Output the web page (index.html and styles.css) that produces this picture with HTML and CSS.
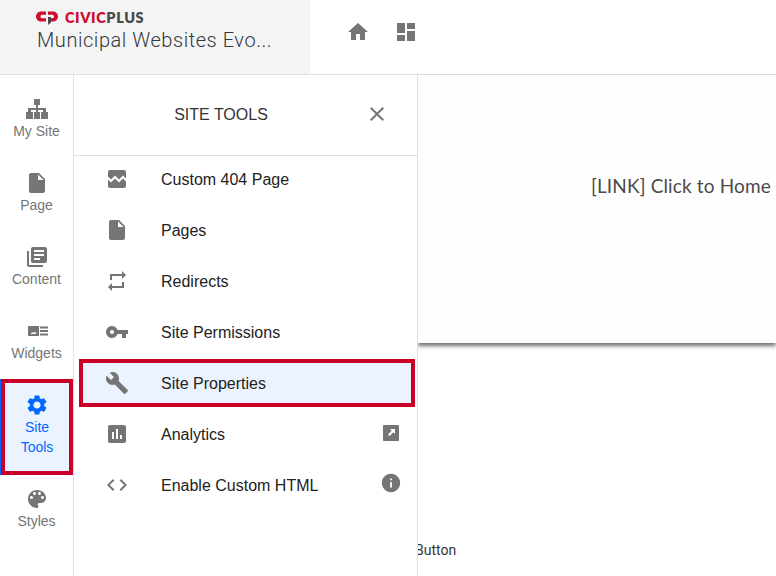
FILE: index.html
```html
<!DOCTYPE html>
<html lang="en">
<head>
<meta charset="utf-8">
<title>Site Tools</title>
<link rel="stylesheet" href="styles.css">
</head>
<body>
<header class="topbar">
  <div class="brand">
    <div class="logo">
      <svg class="logo-mark" viewBox="0 0 22 14" width="22" height="14"><path fill="#ce0e2d" d="M10 .5H5C2.200 .5 0 2.700 0 5.500S2.200 10.500 5 10.500H10V7.200H6C5.200 7.200 4.500 6.500 4.500 5.500S5.200 3.800 6 3.800H10z"/><path fill="#ce0e2d" d="M12 .5h5c2.800 0 5 2.200 5 5s-2.200 5-5 5h-2V7.200h1.500c.8 0 1.500-.7 1.500-1.700s-.7-1.700-1.500-1.700H12z"/><path fill="#4a4a4a" d="M12 6h3v5.500L12 14z"/></svg>
      <span class="logo-text"><span class="logo-civic">CIVIC</span><span class="logo-plus">PLUS</span></span>
    </div>
    <div class="site-name">Municipal Websites Evo...</div>
  </div>
  <div class="top-actions">
    <svg class="icon" viewBox="0 0 24 24"><path d="M10 20v-6h4v6h5v-8h3L12 3 2 12h3v8z"/></svg>
    <svg class="icon" viewBox="0 0 24 24"><path d="M3 13h8V3H3v10zm0 8h8v-6H3v6zm10 0h8V11h-8v10zm0-18v6h8V3h-8z"/></svg>
  </div>
</header>
<div class="workspace">
  <nav class="rail">
    <a class="rail-item">
      <svg class="icon" viewBox="0 0 24 24"><path d="M9 2h6v6h-2v3h8v4h2v7h-7v-7h2v-2h-5v2h2v7H9v-7h2v-2H6v2h2v7H1v-7h2v-4h8V8H9z"/></svg>
      <span class="rail-label">My Site</span>
    </a>
    <a class="rail-item">
      <svg class="icon" viewBox="0 0 24 24"><path d="M6 2c-1.100 0-2 .9-2 2v16c0 1.100.9 2 2 2h12c1.100 0 2-.9 2-2V8l-6-6H6zm7 7V3.500L18.500 9H13z"/></svg>
      <span class="rail-label">Page</span>
    </a>
    <a class="rail-item">
      <svg class="icon" viewBox="0 0 24 24"><path d="M4 6H2v14c0 1.100.9 2 2 2h14v-2H4V6zm16-4H8c-1.100 0-2 .9-2 2v12c0 1.100.9 2 2 2h12c1.100 0 2-.9 2-2V4c0-1.100-.9-2-2-2zm-1 9H9V9h10v2zm-4 4H9v-2h6v2zm4-8H9V5h10v2z"/></svg>
      <span class="rail-label">Content</span>
    </a>
    <a class="rail-item">
      <svg class="icon" viewBox="0 0 24 24"><path fill-rule="evenodd" d="M4 7h9c.6 0 1 .4 1 1v8c0 .6-.4 1-1 1H4c-.6 0-1-.4-1-1V8c0-.6.4-1 1-1zm1.500 8h6l-1.500-2.500-1.500 1.500-1-1z"/><path d="M15 7.500h8v2h-8zM15 11h8v2h-8zM15 14.500h8v2h-8z"/></svg>
      <span class="rail-label">Widgets</span>
    </a>
    <a class="rail-item rail-item-active">
      <svg class="icon" viewBox="0 0 24 24"><path d="M19.140 12.940c.04-.3.06-.61.06-.94 0-.32-.02-.64-.07-.94l2.030-1.580c.18-.14.23-.41.12-.61l-1.920-3.320c-.12-.22-.37-.29-.59-.22l-2.390.96c-.5-.38-1.030-.7-1.620-.94l-.36-2.540c-.04-.24-.24-.41-.48-.41h-3.840c-.24 0-.43.17-.47.41l-.36 2.540c-.59.24-1.130.57-1.620.94l-2.390-.96c-.22-.08-.47 0-.59.22L2.740 8.870c-.12.21-.08.47.12.61l2.030 1.580c-.05.3-.09.63-.09.94s.02.64.07.94l-2.030 1.580c-.18.14-.23.41-.12.61l1.920 3.320c.12.22.37.29.59.22l2.390-.96c.5.38 1.030.7 1.620.94l.36 2.540c.05.24.24.41.48.41h3.840c.24 0 .44-.17.47-.41l.36-2.540c.59-.24 1.130-.56 1.620-.94l2.390.96c.22.08.47 0 .59-.22l1.920-3.320c.12-.22.07-.47-.12-.61l-2.010-1.580zM12 15.600c-1.980 0-3.600-1.620-3.600-3.600s1.620-3.600 3.600-3.600 3.600 1.620 3.600 3.600-1.620 3.600-3.600 3.600z"/></svg>
      <span class="rail-label">Site<br>Tools</span>
    </a>
    <a class="rail-item">
      <svg class="icon" viewBox="0 0 24 24"><path d="M12 3c-4.970 0-9 4.030-9 9s4.030 9 9 9c.83 0 1.500-.67 1.500-1.500 0-.39-.15-.74-.39-1.010-.23-.26-.38-.61-.38-.99 0-.83.67-1.500 1.500-1.500H16c2.760 0 5-2.240 5-5 0-4.420-4.030-8-9-8zm-5.500 9c-.83 0-1.500-.67-1.500-1.500S5.670 9 6.500 9 8 9.670 8 10.500 7.330 12 6.500 12zm3-4C8.670 8 8 7.330 8 6.500S8.670 5 9.500 5s1.500.67 1.500 1.500S10.330 8 9.500 8zm5 0c-.83 0-1.500-.67-1.500-1.500S13.670 5 14.500 5s1.500.67 1.500 1.500S15.330 8 14.500 8zm3 4c-.83 0-1.500-.67-1.500-1.500S16.670 9 17.500 9s1.500.67 1.500 1.500-.67 1.500-1.500 1.500z"/></svg>
      <span class="rail-label">Styles</span>
    </a>
  </nav>
  <aside class="panel">
    <div class="panel-head">
      <h2 class="panel-title">SITE TOOLS</h2>
      <svg class="icon panel-close" viewBox="0 0 24 24"><path d="M19 6.410L17.590 5 12 10.590 6.410 5 5 6.410 10.590 12 5 17.590 6.410 19 12 13.410 17.590 19 19 17.590 13.410 12z"/></svg>
    </div>
    <ul class="tool-list">
      <li class="tool">
        <svg class="icon tool-icon" viewBox="0 0 24 24"><path d="M21 5v6.590l-3-3.010-4 4.010-4-4-4 4-3-3.010V5c0-1.100.9-2 2-2h14c1.100 0 2 .9 2 2zm-3 6.420l3 3.010V19c0 1.100-.9 2-2 2H5c-1.100 0-2-.9-2-2v-6.580l3 2.990 4-4 4 4 4-3.990z"/></svg>
        <span class="tool-name">Custom 404 Page</span>
      </li>
      <li class="tool">
        <svg class="icon tool-icon" viewBox="0 0 24 24"><path d="M6 2c-1.100 0-2 .9-2 2v16c0 1.100.9 2 2 2h12c1.100 0 2-.9 2-2V8l-6-6H6zm7 7V3.500L18.500 9H13z"/></svg>
        <span class="tool-name">Pages</span>
      </li>
      <li class="tool">
        <svg class="icon tool-icon" viewBox="0 0 24 24"><path d="M7 7h10v3l4-4-4-4v3H5v6h2V7zm10 10H7v-3l-4 4 4 4v-3h12v-6h-2v4z"/></svg>
        <span class="tool-name">Redirects</span>
      </li>
      <li class="tool">
        <svg class="icon tool-icon" viewBox="0 0 24 24"><path d="M12.650 10C11.830 7.670 9.610 6 7 6c-3.310 0-6 2.690-6 6s2.690 6 6 6c2.610 0 4.830-1.670 5.650-4H17v4h4v-4h2v-4H12.650zM7 14c-1.100 0-2-.9-2-2s.9-2 2-2 2 .9 2 2-.9 2-2 2z"/></svg>
        <span class="tool-name">Site Permissions</span>
      </li>
      <li class="tool tool-active">
        <svg class="icon tool-icon" viewBox="0 0 24 24"><path d="M22.700 19l-9.100-9.100c.9-2.300.4-5-1.500-6.900-2-2-5-2.400-7.400-1.300L9 6 6 9 1.600 4.700C.4 7.100.9 10.100 2.900 12.100c1.900 1.900 4.600 2.400 6.900 1.500l9.100 9.100c.4.4 1 .4 1.400 0l2.300-2.300c.5-.4.5-1.100.1-1.400z"/></svg>
        <span class="tool-name">Site Properties</span>
      </li>
      <li class="tool">
        <svg class="icon tool-icon" viewBox="0 0 24 24"><path d="M19 3H5c-1.100 0-2 .9-2 2v14c0 1.100.9 2 2 2h14c1.100 0 2-.9 2-2V5c0-1.100-.9-2-2-2zM9 17H7v-7h2v7zm4 0h-2V7h2v10zm4 0h-2v-4h2v4z"/></svg>
        <span class="tool-name">Analytics</span>
        <svg class="icon tool-extra" viewBox="0 0 20 20"><path fill-rule="evenodd" d="M3 2h14c.6 0 1 .4 1 1v14c0 .6-.4 1-1 1H3c-.6 0-1-.4-1-1V3c0-.6.4-1 1-1zm6 4l1.700 1.700L7 11.400 8.600 13l3.700-3.700L14 11V6z"/></svg>
      </li>
      <li class="tool">
        <svg class="icon tool-icon" viewBox="0 0 24 24"><path d="M9.400 16.600L4.800 12l4.600-4.600L8 6l-6 6 6 6 1.400-1.400zm5.200 0l4.600-4.600-4.600-4.600L16 6l6 6-6 6-1.400-1.400z"/></svg>
        <span class="tool-name">Enable Custom HTML</span>
        <svg class="icon tool-extra tool-info" viewBox="0 0 24 24"><path d="M12 2C6.480 2 2 6.480 2 12s4.480 10 10 10 10-4.480 10-10S17.520 2 12 2zm1 15h-2v-6h2v6zm0-8h-2V7h2v2z"/></svg>
      </li>
    </ul>
  </aside>
  <main class="canvas">
    <section class="preview">
      <p class="preview-link">[LINK] Click to Home</p>
    </section>
    <p class="canvas-button">Button</p>
  </main>
</div>
</body>
</html>
```
FILE: styles.css
```css
* { box-sizing: border-box; }
html, body { margin: 0; height: 100%; overflow: hidden; }
body { background: #fff; font-family: "Liberation Sans", Arial, sans-serif; color: #222; }

.icon { width: 24px; height: 24px; fill: #757575; flex: none; display: block; }

.topbar { display: flex; height: 75px; border-bottom: 1px solid #e0e0e0; }
.brand { width: 310px; background: #f4f4f4; padding: 11px 0 0 36px; }
.logo { display: flex; align-items: center; gap: 7px; height: 14px; }
.logo-mark { display: block; flex: none; }
.logo-text { font: 800 14.500px/14px Lato, sans-serif; letter-spacing: .6px; }
.logo-civic { color: #ce0e2d; }
.logo-plus { color: #4a4a4a; }
.site-name { font: 300 20px/24px Roboto, sans-serif; letter-spacing: .55px; color: #33383f; margin: 3px 0 0 1px; white-space: nowrap; }
.top-actions { display: flex; gap: 24px; padding: 20px 0 0 36px; }

.workspace { display: flex; height: 501px; }

.rail { width: 74px; flex: none; border-right: 1px solid #e0e0e0; padding-top: 22px; background: #fff; display: flex; flex-direction: column; }
.rail-item { display: flex; flex-direction: column; align-items: center; margin-bottom: 30px; }
.rail-label { font-size: 14px; line-height: 20px; color: #757575; text-align: center; }
.rail-item-active { margin: -14px 0 12px 1px; padding: 10px 0 14px; border: 4px solid #cb0028; background: #ebf4fe; box-shadow: -1px 0 0 #0068ff; }
.rail-item-active .icon { fill: #0068ff; }
.rail-item-active .rail-label { color: #0068ff; }

.panel { width: 344px; flex: none; border-right: 1px solid #e0e0e0; background: #fff; position: relative; z-index: 1; }
.panel-head { display: flex; align-items: center; justify-content: center; height: 80px; padding: 0 49px 1px 0; box-shadow: 0 1px 0 #e0e0e0; position: relative; }
.panel-title { margin: 0; font: 400 16px/20px "Liberation Sans", Arial, sans-serif; color: #333; }
.panel-close { position: absolute; left: 291px; top: 27px; }
.tool-list { list-style: none; margin: 0; padding: 0; }
.tool { display: flex; align-items: center; height: 48px; margin: 0 2px 3px 5px; padding-left: 26px; }
.tool-icon { margin-right: 32px; }
.tool-name { font-size: 16px; line-height: 20px; color: #222; flex: 1; padding-top: 2px; }
.tool-extra { width: 20px; height: 20px; margin: -3px 14px 0 0; }
.tool-info { width: 22px; height: 22px; margin: -5px 13px 0 0; }
.tool-active { background: #ebf4fe; border: 4px solid #cb0028; padding-left: 22px; }

.canvas { flex: 1; min-width: 0; background: #fff; position: relative; }
.preview { height: 268px; background: #fefefe; box-shadow: 0 3px 4px #707070; padding-top: 99px; }
.preview-link { margin: 0 0 0 173px; font: 400 19px/24px Lato, sans-serif; letter-spacing: .14px; color: #4a4a4a; white-space: nowrap; }
.canvas-button { margin: 197px 0 0 -3px; font: 400 14px/20px Roboto, sans-serif; color: #333; }
```
